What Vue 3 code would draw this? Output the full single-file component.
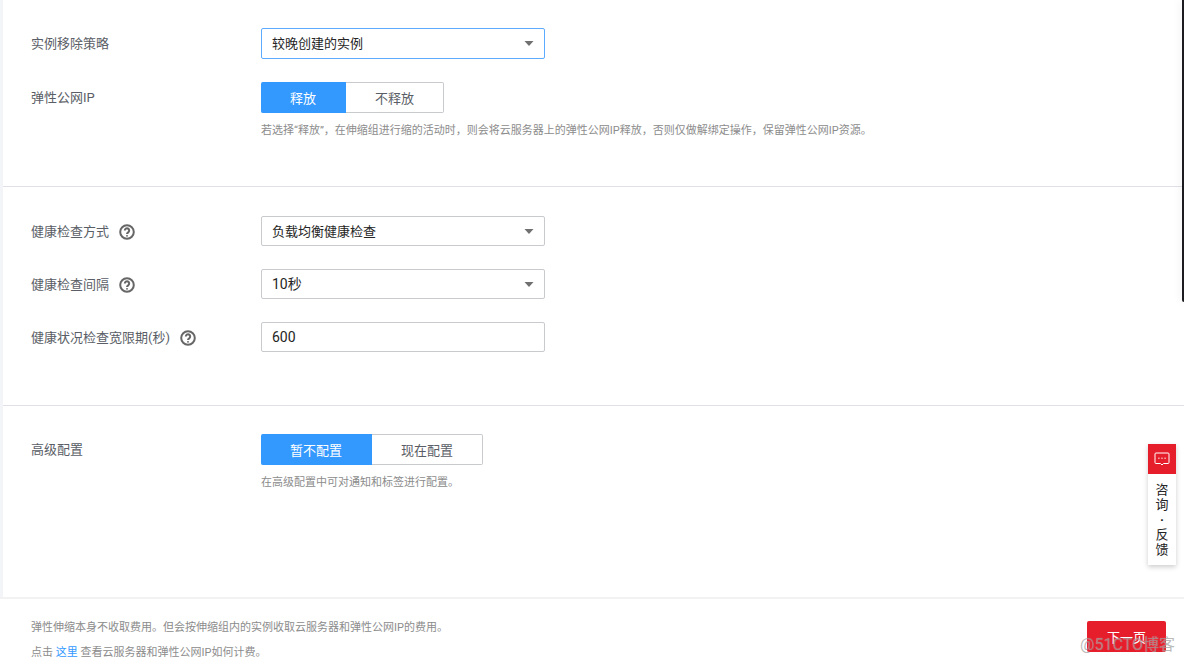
<script setup>
import { ref } from 'vue'

const removalPolicy = ref('较晚创建的实例')
const eip = ref('释放')
const checkMethod = ref('负载均衡健康检查')
const checkInterval = ref('10秒')
const gracePeriod = ref('600')
const advanced = ref('暂不配置')

const policies = ['较晚创建的实例', '较早创建的实例']
const methods = ['负载均衡健康检查', '云服务器健康检查']
const intervals = ['10秒', '1分钟', '5分钟']
const eipOptions = ['释放', '不释放']
const advancedOptions = ['暂不配置', '现在配置']
</script>

<template>
  <div class="page">
    <main class="content">
      <section class="section">
        <div class="row">
          <label class="label" for="policy">实例移除策略</label>
          <div class="select-box active">
            <select id="policy" v-model="removalPolicy" class="control">
              <option v-for="p in policies" :key="p">{{ p }}</option>
            </select>
            <svg class="arrow" viewBox="0 0 10 5" aria-hidden="true"><path d="M0.5 0h9L5 5z" /></svg>
          </div>
        </div>
        <div class="row">
          <span id="eip-label" class="label">弹性公网IP</span>
          <div class="field">
            <div class="segments" role="group" aria-labelledby="eip-label">
              <button
                v-for="o in eipOptions"
                :key="o"
                type="button"
                class="segment"
                :class="{ chosen: eip === o }"
                :aria-pressed="eip === o"
                @click="eip = o"
              >{{ o }}</button>
            </div>
            <p class="hint">若选择“释放”，在伸缩组进行缩的活动时，则会将云服务器上的弹性公网IP释放，否则仅做解绑定操作，保留弹性公网IP资源。</p>
          </div>
        </div>
      </section>

      <section class="section">
        <div class="row">
          <label class="label" for="method">健康检查方式
            <svg class="help" viewBox="0 0 16 16" aria-hidden="true">
              <circle cx="8" cy="8" r="6.8" />
              <path d="M5.8 6.5a2.2 2.2 0 1 1 3.6 1.7C8.5 8.9 8 9.2 8 10.1M8 11.2v1.4" />
            </svg>
          </label>
          <div class="select-box">
            <select id="method" v-model="checkMethod" class="control">
              <option v-for="m in methods" :key="m">{{ m }}</option>
            </select>
            <svg class="arrow" viewBox="0 0 10 5" aria-hidden="true"><path d="M0.5 0h9L5 5z" /></svg>
          </div>
        </div>
        <div class="row">
          <label class="label" for="interval">健康检查间隔
            <svg class="help" viewBox="0 0 16 16" aria-hidden="true">
              <circle cx="8" cy="8" r="6.8" />
              <path d="M5.8 6.5a2.2 2.2 0 1 1 3.6 1.7C8.5 8.9 8 9.2 8 10.1M8 11.2v1.4" />
            </svg>
          </label>
          <div class="select-box">
            <select id="interval" v-model="checkInterval" class="control">
              <option v-for="i in intervals" :key="i">{{ i }}</option>
            </select>
            <svg class="arrow" viewBox="0 0 10 5" aria-hidden="true"><path d="M0.5 0h9L5 5z" /></svg>
          </div>
        </div>
        <div class="row">
          <label class="label" for="grace">健康状况检查宽限期(秒)
            <svg class="help" viewBox="0 0 16 16" aria-hidden="true">
              <circle cx="8" cy="8" r="6.8" />
              <path d="M5.8 6.5a2.2 2.2 0 1 1 3.6 1.7C8.5 8.9 8 9.2 8 10.1M8 11.2v1.4" />
            </svg>
          </label>
          <div class="select-box">
            <input id="grace" v-model="gracePeriod" class="control" type="text" />
          </div>
        </div>
      </section>

      <section class="section">
        <div class="row">
          <span id="advanced-label" class="label">高级配置</span>
          <div class="field">
            <div class="segments" role="group" aria-labelledby="advanced-label">
              <button
                v-for="o in advancedOptions"
                :key="o"
                type="button"
                class="segment"
                :class="{ chosen: advanced === o }"
                :aria-pressed="advanced === o"
                @click="advanced = o"
              >{{ o }}</button>
            </div>
            <p class="hint">在高级配置中可对通知和标签进行配置。</p>
          </div>
        </div>
      </section>
    </main>

    <footer class="footer">
      <div class="notes">
        <p>弹性伸缩本身不收取费用。但会按伸缩组内的实例收取云服务器和弹性公网IP的费用。</p>
        <p>点击 <a href="#">这里</a> 查看云服务器和弹性公网IP如何计费。</p>
      </div>
      <button type="button" class="next">下一页</button>
      <span class="watermark">@51CTO博客</span>
    </footer>

    <div class="side-panel"></div>

    <button type="button" class="feedback">
      <span class="feedback-icon">
        <svg viewBox="0 0 16 14" aria-hidden="true">
          <path d="M2 1h12a1 1 0 0 1 1 1v8.5a1 1 0 0 1-1 1H9.5L8 13l-1.500-1.500H2a1 1 0 0 1-1-1V2a1 1 0 0 1 1-1z" />
          <path d="M4.200 6.200h1.400M7.300 6.200h1.400M10.400 6.200h1.400" />
        </svg>
      </span>
      <span class="feedback-text">
        <span>咨</span><span>询</span><span class="dot">·</span><span>反</span><span>馈</span>
      </span>
    </button>
  </div>
</template>

<style>
body {
  background: #fff;
}
</style>

<style scoped>
.page {
  position: relative;
  display: flex;
  flex-direction: column;
  min-height: 100vh;
  font-family: Roboto, "Noto Sans CJK SC", sans-serif;
  font-size: 13px;
  color: #5a5e66;
}

.page * {
  box-sizing: border-box;
}

button,
select,
input {
  margin: 0;
  font: inherit;
}

p {
  margin: 0;
}

.content {
  flex: 1;
  border-left: 3px solid #f3f4f7;
}

.section {
  display: flex;
  flex-direction: column;
  gap: 23px;
  padding: 29px 28px 53px;
  border-bottom: 1px solid #dfe1e6;
}

.section:first-child {
  padding-top: 28px;
  padding-bottom: 45px;
}

.section:last-child {
  padding-top: 28px;
  border-bottom: 0;
}

.row {
  display: flex;
  align-items: flex-start;
}

.label {
  display: flex;
  align-items: center;
  flex: 0 0 230px;
  gap: 10px;
  height: 28px;
}

.help {
  width: 16px;
  height: 16px;
  margin-top: 3px;
  fill: none;
  stroke: #666;
  stroke-width: 2;
}

.select-box {
  position: relative;
  flex: 0 1 284px;
}

.control {
  display: block;
  width: 100%;
  height: 30px;
  padding: 0 10px;
  border: 1px solid #c8cacd;
  border-radius: 2px;
  outline: 0;
  background: #fff;
  color: #252525;
  appearance: none;
}

input.control,
#interval {
  font-size: 14px;
}

.active .control {
  height: 31px;
  border-color: #5cabff;
}

.arrow {
  position: absolute;
  top: 13px;
  right: 11px;
  width: 10px;
  height: 5px;
  fill: #707070;
  pointer-events: none;
}

.field {
  flex: 1;
}

.segments {
  display: flex;
}

.segment {
  height: 31px;
  padding: 0 29px;
  border: 1px solid #c8cacd;
  border-left: 0;
  border-radius: 0 2px 2px 0;
  background: #fff;
  color: #5a5e66;
}

.segment.chosen {
  border-color: #3399ff;
  border-radius: 2px 0 0 2px;
  background: #3399ff;
  color: #fff;
}

.hint {
  padding-top: 8px;
  font-size: 11px;
  line-height: 20px;
  color: #8c8c8c;
}

.footer {
  position: relative;
  display: flex;
  align-items: flex-start;
  justify-content: space-between;
  padding: 19px 18px 0 31px;
  border-top: 2px solid #f2f2f3;
}

.notes {
  display: flex;
  flex-direction: column;
  gap: 5px;
  font-size: 11px;
  line-height: 20px;
  color: #8c8c8c;
}

.notes a {
  color: #3399ff;
  text-decoration: none;
}

.next {
  height: 31px;
  margin-top: 3px;
  padding: 0 20px;
  border: 0;
  border-radius: 2px;
  background: #e61e2b;
  color: #fff;
}

.watermark {
  position: absolute;
  right: 9px;
  bottom: 7px;
  font-size: 16px;
  line-height: 22px;
  color: rgba(140, 140, 140, 0.6);
  text-shadow: 0 0 1px rgba(255, 255, 255, 0.4);
  pointer-events: none;
}

.side-panel {
  position: absolute;
  top: 0;
  right: 0;
  width: 2px;
  height: 302px;
  border-radius: 0 0 0 2px;
  background: #1c1c20;
  box-shadow: 0 0 8px rgba(0, 0, 0, 0.15);
}

.feedback {
  position: absolute;
  right: 8px;
  bottom: 98px;
  display: flex;
  flex-direction: column;
  width: 28px;
  padding: 0;
  border: 0;
  background: #fff;
  color: #252525;
  box-shadow: 0 2px 5px rgba(0, 0, 0, 0.2);
}

.feedback-icon {
  display: flex;
  align-items: center;
  justify-content: center;
  width: 100%;
  height: 30px;
  background: #e61e2b;
}

.feedback-icon svg {
  width: 16px;
  height: 14px;
  fill: none;
  stroke: #fff;
  stroke-width: 1;
}

.feedback-text {
  display: flex;
  flex-direction: column;
  align-self: center;
  padding: 8px 0;
  line-height: 15px;
}

.dot {
  font-weight: bold;
}
</style>
